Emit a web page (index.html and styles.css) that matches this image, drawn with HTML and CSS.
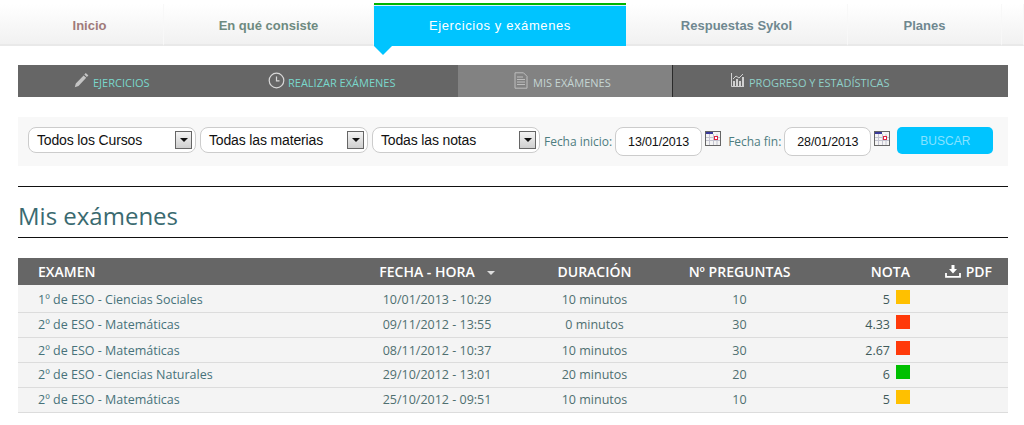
FILE: index.html
```html
<!DOCTYPE html>
<html lang="es">
<head>
<meta charset="utf-8">
<title>Mis exámenes</title>
<link rel="stylesheet" href="styles.css">
</head>
<body>
<nav class="topnav">
  <a class="topitem w-inicio">Inicio</a>
  <a class="topitem w-consiste">En qué consiste</a>
  <a class="topitem active">Ejercicios y exámenes</a>
  <a class="topitem w-resp">Respuestas Sykol</a>
  <a class="topitem w-planes">Planes</a>
  <a class="topitem w-rest"></a>
</nav>
<main class="content">
  <nav class="subnav">
    <a class="subitem s1"><svg class="ico" width="16" height="16" viewBox="0 0 16 16"><path d="M12.800 1l2.600 2.400-1.500 1.600-2.600-2.400zM10.600 3.400l2.600 2.400-7.700 8.100-3.700 1.300 1-3.700z" fill="#c4c4c4"/></svg>EJERCICIOS</a>
    <a class="subitem s2"><svg class="ico" width="17" height="17" viewBox="0 0 17 17"><circle cx="8.500" cy="8.500" r="7.300" fill="none" stroke="#d8d8d8" stroke-width="1.200"/><path d="M8.500 4.500v4.400h3" fill="none" stroke="#d8d8d8" stroke-width="1.200"/></svg>REALIZAR EXÁMENES</a>
    <a class="subitem s3 current"><svg class="ico" width="14" height="17" viewBox="0 0 14 17"><path d="M1 .8h8.500L13 4.300v11.900H1z" fill="none" stroke="#bdbdbd"/><path d="M3 5h6M3 7.500h8M3 10h8M3 12.500h8" stroke="#bdbdbd"/></svg>MIS EXÁMENES</a>
    <a class="subitem s4"><svg class="ico" width="13" height="14" viewBox="0 0 13 14"><path d="M.5 0v13.500H13" fill="none" stroke="#d0d0d0"/><path d="M2 13h2V8H2zM5 13h2V6H5zM8 13h2V8H8zM11 13h2V4h-2z" fill="#d0d0d0"/><path d="M2 6l3-3 3 2 4-4" fill="none" stroke="#d0d0d0"/></svg>PROGRESO Y ESTADÍSTICAS</a>
  </nav>

  <form class="filters">
    <div class="select"><span>Todos los Cursos</span><i class="arrowbox"></i></div>
    <div class="select"><span>Todas las materias</span><i class="arrowbox"></i></div>
    <div class="select"><span>Todas las notas</span><i class="arrowbox"></i></div>
    <label class="lbl">Fecha inicio:</label>
    <div class="date">13/01/2013</div>
    <svg class="cal" width="16" height="15" viewBox="0 0 16 15"><rect x=".5" y=".5" width="15" height="14" fill="#f4f4f4" stroke="#666"/><rect x="1" y="1" width="7" height="2" fill="#3a3a9a"/><path d="M1 6.500h14M1 9.500h14M4.500 3v11M8.500 3v11M12 3v11" stroke="#c4c4d0"/><rect x="9.500" y="5.500" width="3" height="3" fill="#fff" stroke="#e02040"/></svg>
    <label class="lbl">Fecha fin:</label>
    <div class="date">28/01/2013</div>
    <svg class="cal" width="16" height="15" viewBox="0 0 16 15"><rect x=".5" y=".5" width="15" height="14" fill="#f4f4f4" stroke="#666"/><rect x="1" y="1" width="7" height="2" fill="#3a3a9a"/><path d="M1 6.500h14M1 9.500h14M4.500 3v11M8.500 3v11M12 3v11" stroke="#c4c4d0"/><rect x="9.500" y="5.500" width="3" height="3" fill="#fff" stroke="#e02040"/></svg>
    <button class="buscar" type="button">BUSCAR</button>
  </form>

  <h1 class="title">Mis exámenes</h1>

  <div class="table">
    <div class="row head">
      <div class="c-ex">EXAMEN</div>
      <div class="c-fe">FECHA - HORA<i class="sort"></i></div>
      <div class="c-du">DURACIÓN</div>
      <div class="c-pr">Nº PREGUNTAS</div>
      <div class="c-no">NOTA</div>
      <div class="c-pdf"><svg class="dl" width="16" height="13" viewBox="0 0 16 13"><path d="M6.500 0h3v4h2.500L8 8.500 4 4h2.500z" fill="#fff"/><path d="M1 8v3.800h14V8" fill="none" stroke="#fff" stroke-width="1.800"/></svg>PDF</div>
    </div>
    <div class="row r1"><div class="c-ex">1º de ESO - Ciencias Sociales</div><div class="c-fe">10/01/2013 - 10:29</div><div class="c-du">10 minutos</div><div class="c-pr">10</div><div class="c-no">5<i class="sq amber"></i></div><div class="c-pdf"></div></div>
    <div class="row up"><div class="c-ex">2º de ESO - Matemáticas</div><div class="c-fe">09/11/2012 - 13:55</div><div class="c-du">0 minutos</div><div class="c-pr">30</div><div class="c-no">4.33<i class="sq red"></i></div><div class="c-pdf"></div></div>
    <div class="row"><div class="c-ex">2º de ESO - Matemáticas</div><div class="c-fe">08/11/2012 - 10:37</div><div class="c-du">10 minutos</div><div class="c-pr">30</div><div class="c-no">2.67<i class="sq red"></i></div><div class="c-pdf"></div></div>
    <div class="row up"><div class="c-ex">2º de ESO - Ciencias Naturales</div><div class="c-fe">29/10/2012 - 13:01</div><div class="c-du">20 minutos</div><div class="c-pr">20</div><div class="c-no">6<i class="sq green"></i></div><div class="c-pdf"></div></div>
    <div class="row up"><div class="c-ex">2º de ESO - Matemáticas</div><div class="c-fe">25/10/2012 - 09:51</div><div class="c-du">10 minutos</div><div class="c-pr">10</div><div class="c-no">5<i class="sq amber"></i></div><div class="c-pdf"></div></div>
  </div>
</main>
</body>
</html>
```
FILE: styles.css
```css
* { box-sizing: border-box; }
html, body { margin: 0; padding: 0; background: #fff; }
body { width: 1024px; height: 425px; overflow: hidden; font-family: "Open Sans", sans-serif; color: #555; }

.topnav { display: flex; height: 46px; padding-top: 4px; }
.topitem { height: 42px; padding-top: 3px; display: flex; align-items: center; justify-content: center; font: bold 13px "Liberation Sans", sans-serif; color: #6f8890; background: linear-gradient(#fff, #f1f1f1); border-bottom: 2px solid #e9e9e9; border-right: 1px solid #f8f8f8; }
.w-inicio { width: 164px; padding-left: 16px; color: #a07a7a; }
.w-consiste { width: 210px; color: #6e8a80; }
.active { position: relative; width: 252px; height: 43px; margin-top: -1px; padding-top: 0; background: #00c4ff; color: #fff; font-weight: normal; font-size: 13px; letter-spacing: .6px; border-top: 2px solid #00b400; border-bottom: 0; border-right: 0; box-shadow: inset 0 1px 0 #d5f5ff; }
.active::after { content: ""; position: absolute; left: 0; top: 100%; border-left: 9px solid transparent; border-right: 9px solid transparent; border-top: 9px solid #00c4ff; }
.w-resp { width: 222px; }
.w-planes { width: 154px; }
.w-rest { flex: 1; }

.content { margin: 0 16px 0 18px; }

.subnav { display: flex; height: 32px; margin-top: 19px; background: #666; }
.subitem { display: flex; align-items: center; padding-top: 2px; font-size: 11px; color: #79d8cc; }
.ico { margin-top: -4px; flex: none; }
.s1 { width: 210px; padding-left: 55px; gap: 4px; }
.s2 { width: 230px; padding-left: 40px; gap: 3px; }
.s3 { width: 215px; padding-left: 56px; gap: 5px; background: #828282; color: #c5d5d3; border-right: 1px solid #2a2a2a; }
.s4 { flex: 1; padding-left: 58px; gap: 5px; color: #8fd0c8; }

.filters { display: flex; align-items: flex-start; height: 49px; margin-top: 20px; padding: 10px 15px 0 10px; background: #f8f8f8; font-family: "Liberation Sans", sans-serif; }
.select { height: 26px; width: 168px; margin-right: 4px; padding: 0 3px 0 8px; display: flex; align-items: center; justify-content: space-between; background: #fff; border: 1px solid #ccc; border-radius: 8px; font-size: 14px; letter-spacing: -.15px; color: #111; flex: none; }
.arrowbox { width: 17px; height: 18px; border: 1px solid #666; background: linear-gradient(#f4f4f4, #cfcfcf); display: flex; align-items: center; justify-content: center; }
.arrowbox::after { content: ""; border-left: 4px solid transparent; border-right: 4px solid transparent; border-top: 4px solid #111; }
.lbl { height: 29px; display: flex; align-items: center; font: 12px "Open Sans", sans-serif; letter-spacing: -.02px; color: #4d7d80; white-space: nowrap; flex: none; }
.date { width: 87px; height: 29px; margin: 0 3px; display: flex; align-items: center; justify-content: center; background: #fff; border: 1px solid #ccc; border-radius: 8px; font-size: 12.500px; letter-spacing: -.15px; color: #111; flex: none; }
.cal { margin: 4px 7px 0 0; flex: none; }
.buscar { width: 96px; height: 27px; margin-left: auto; flex: none; background: #00c4ff; border: 0; border-radius: 5px; color: #86e2ff; font: 12px "Liberation Sans", sans-serif; }

.title { margin: 20px 0 20px; height: 52px; border-top: 1px solid #111; border-bottom: 1px solid #111; font-weight: 400; font-size: 24px; line-height: 58px; color: #3a6a70; }

.row { display: grid; grid-template-columns: 330px 178px 137px 153px 94px 98px; align-items: center; background: #f4f4f4; border-bottom: 1px solid #dcdcdc; height: 25px; font-size: 12.500px; color: #4f6f70; }
.row > div { text-align: center; }
.row .c-ex { text-align: left; padding-left: 20px; color: #47727a; }
.row .c-no { display: flex; justify-content: flex-end; align-items: center; gap: 6px; color: #3f5a5a; }
.r1 { height: 28px; padding-top: 2px; }
.up { padding-bottom: 2px; }
.row.head { height: 27px; background: #666; font-weight: 600; font-size: 14px; border-bottom: 0; }
.head > div { color: #fff !important; }
.row .c-pdf { display: flex; align-items: center; justify-content: flex-end; gap: 5px; padding-right: 16px; }
.sort { display: inline-block; margin-left: 12px; vertical-align: middle; border-left: 4px solid transparent; border-right: 4px solid transparent; border-top: 4px solid #ddd; }
.sq { display: block; width: 14px; height: 14px; margin-bottom: 5px; }
.amber { background: #ffc000; }
.red { background: #ff3a0a; }
.green { background: #00c000; }
```
